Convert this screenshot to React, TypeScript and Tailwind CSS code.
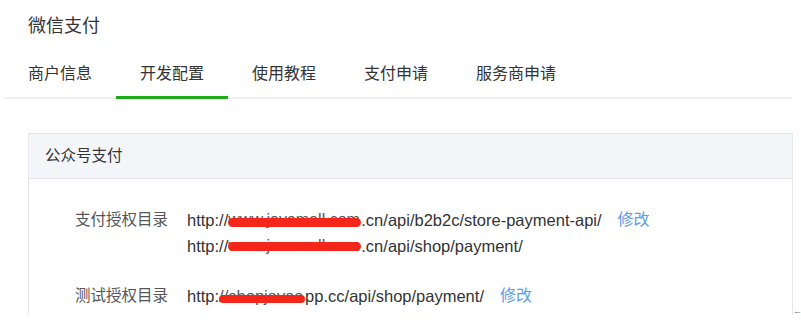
const tabs = ['商户信息', '开发配置', '使用教程', '支付申请', '服务商申请'];

function Redacted({ text, width, top, height }: { text: string; width: string; top: string; height: string }) {
  return (
    <span className={`relative inline-block h-[26px] whitespace-nowrap text-[#555] ${width}`}>
      {text}
      <span className={`absolute left-0 right-0 rounded-full bg-[#f4261a] ${top} ${height}`} />
    </span>
  );
}

export default function App() {
  return (
    <div className="relative h-[329px] w-[801px] overflow-hidden bg-white font-['Liberation_Sans','Noto_Sans_CJK_SC',sans-serif]">
      {/* 标题 */}
      <div className="pl-[28px] pt-[14px] text-[18px] leading-6 text-[#353535]">微信支付</div>

      {/* 标签栏 */}
      <div className="mx-[4px] mt-6 flex w-[788px] border-b-2 border-[#efefef]">
        {tabs.map((t, i) => (
          <div
            key={t}
            className={`-mb-[2px] border-b-[3px] px-6 pb-[10px] text-[16px] leading-6 text-[#333] ${
              i === 1 ? 'border-[#1aad19]' : 'border-transparent'
            }`}
          >
            {t}
          </div>
        ))}
      </div>

      {/* 公众号支付 面板 */}
      <div className="ml-[28px] mt-[34px] w-[765px] border border-b-0 border-[#e7e7eb]">
        <div className="flex h-[45px] items-center border-b border-[#e7e7eb] bg-[#f4f5f9] pl-4 text-[15.5px] text-[#353535]">
          公众号支付
        </div>
        <div className="pb-[6px] pl-[46px] pt-[28px] text-[16.5px] leading-[26px]">
          <div className="flex">
            <div className="w-[93px] text-[15.5px] text-[#555]">支付授权目录</div>
            <div className="ml-[19px] text-[#333]">
              <div className="flex items-center">
                <span>http://</span>
                <Redacted text="www.javamall.com" width="w-[133px] text-[16px]" top="top-[11px]" height="h-[9px]" />
                <span>.cn/api/b2b2c/store-payment-api/</span>
                <a className="ml-4 text-[16px] text-[#5b9de6]">修改</a>
              </div>
              <div className="flex items-center">
                <span>http://</span>
                <Redacted text="www.javamall.com" width="w-[133px] text-[16px]" top="top-[9px]" height="h-[9px]" />
                <span>.cn/api/shop/payment/</span>
              </div>
            </div>
          </div>
          <div className="mt-6 flex">
            <div className="w-[93px] text-[15.5px] text-[#555]">测试授权目录</div>
            <div className="ml-[19px] flex items-center text-[#333]">
              <span>http:</span>
              <Redacted text="//shopjavaa" width="w-[86px]" top="top-[12px]" height="h-[8px]" />
              <span>pp.cc/api/shop/payment/</span>
              <a className="ml-4 text-[16px] text-[#5b9de6]">修改</a>
            </div>
          </div>
        </div>
      </div>

      <span className="absolute left-[793px] top-[307px] text-[9px] leading-none text-[#777]">←</span>
    </div>
  );
}
